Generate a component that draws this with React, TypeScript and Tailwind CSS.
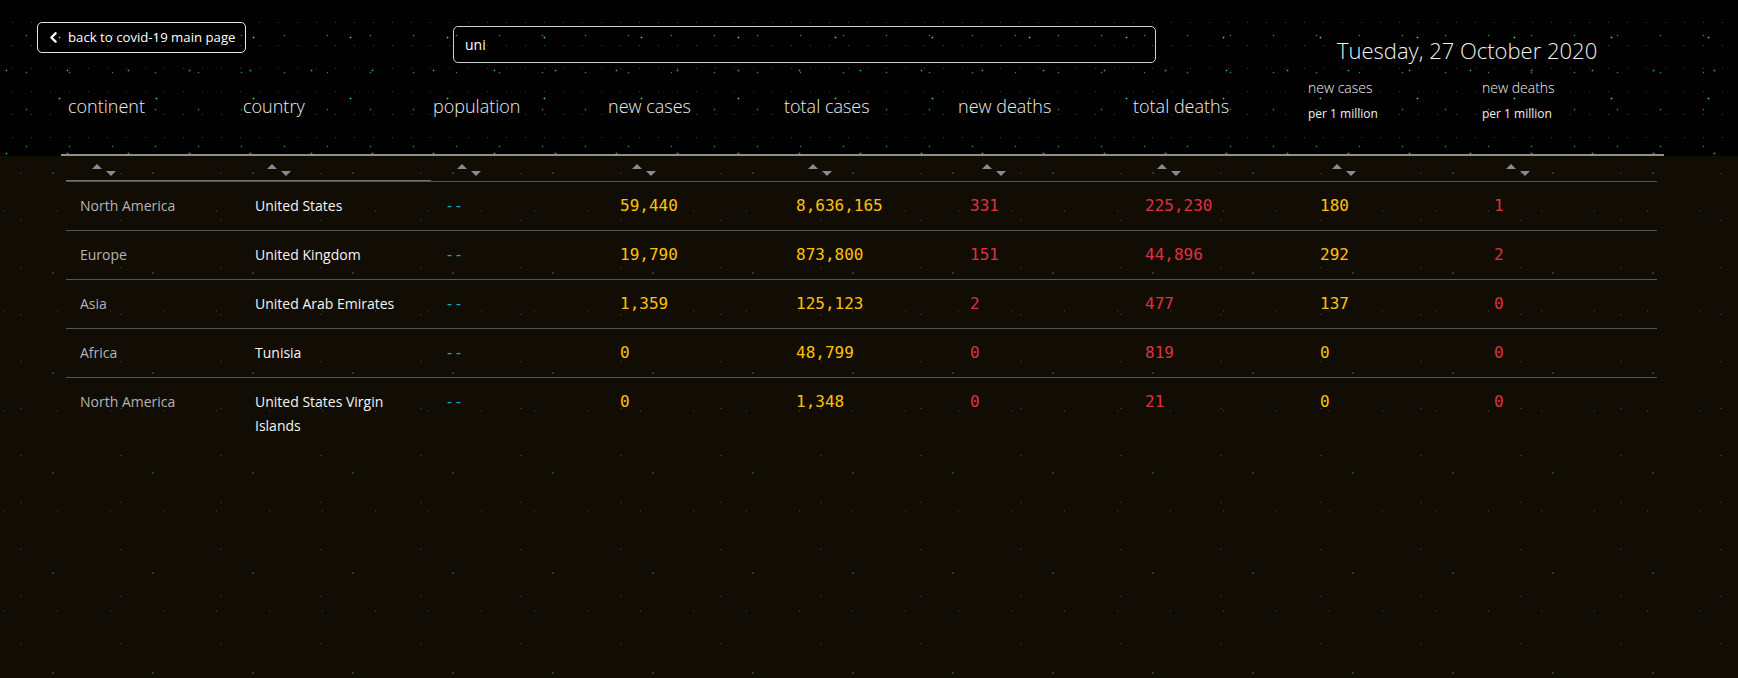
import React from "react";
import { ChevronLeft } from "lucide-react";

const GRID =
  "grid grid-cols-[175px_190px_175px_176px_174px_175px_175px_174px_177px]";

type Row = {
  continent: string;
  country: string;
  newCases: string;
  totalCases: string;
  newDeaths: string;
  totalDeaths: string;
  casesM: string;
  deathsM: string;
};

const rows: Row[] = [
  { continent: "North America", country: "United States", newCases: "59,440", totalCases: "8,636,165", newDeaths: "331", totalDeaths: "225,230", casesM: "180", deathsM: "1" },
  { continent: "Europe", country: "United Kingdom", newCases: "19,790", totalCases: "873,800", newDeaths: "151", totalDeaths: "44,896", casesM: "292", deathsM: "2" },
  { continent: "Asia", country: "United Arab Emirates", newCases: "1,359", totalCases: "125,123", newDeaths: "2", totalDeaths: "477", casesM: "137", deathsM: "0" },
  { continent: "Africa", country: "Tunisia", newCases: "0", totalCases: "48,799", newDeaths: "0", totalDeaths: "819", casesM: "0", deathsM: "0" },
  { continent: "North America", country: "United States Virgin Islands", newCases: "0", totalCases: "1,348", newDeaths: "0", totalDeaths: "21", casesM: "0", deathsM: "0" },
];

const headers = [
  "continent",
  "country",
  "population",
  "new cases",
  "total cases",
  "new deaths",
  "total deaths",
];

function SortArrows() {
  return (
    <svg width="26" height="13" viewBox="0 0 26 13" className="block">
      <polygon points="0,5 5,0 10,5" fill="#868b93" />
      <polygon points="14,7 24,7 19,12" fill="#868b93" />
    </svg>
  );
}

const sans = "font-['Open_Sans','Noto_Sans',sans-serif]";
const mono = "font-['DejaVu_Sans_Mono','Liberation_Mono',monospace]";

export default function App() {
  return (
    <div
      className={`min-h-[678px] w-full bg-[#110d05] ${sans} [background-image:radial-gradient(circle,#3a3424_0.7px,transparent_1.1px),radial-gradient(circle,#2e2a1d_0.7px,transparent_1.1px),radial-gradient(circle,#35301f_0.7px,transparent_1.1px)] [background-size:100px_100px,53px_100px,100px_47px] [background-position:3px_23px,31px_61px,71px_9px]`}
    >
      {/* header band */}
      <div className="w-full bg-black [background-image:radial-gradient(circle,#3fcf3f_0.7px,transparent_1.2px),radial-gradient(circle,#2fa82f_0.7px,transparent_1.2px),radial-gradient(circle,#2b8f2b_0.6px,transparent_1.1px),radial-gradient(circle,#3a3a3a_0.6px,transparent_1px)] [background-size:97px_61px,61px_83px,43px_37px,19px_23px] [background-position:11px_7px,37px_29px,5px_17px,3px_11px]">
        {/* top bar */}
        <div className="flex h-[66px] items-start">
          <button className="ml-[37px] mt-[22px] flex h-[31px] w-[209px] items-center rounded-[5px] border border-[#e6e6e6] bg-transparent pl-[7px] text-[13.2px] text-white whitespace-nowrap">
            <ChevronLeft size={17} strokeWidth={3.4} className="shrink-0 text-white" />
            <span className="ml-[6px] leading-none">back to covid-19 main page</span>
          </button>
          <input
            readOnly
            value="uni"
            className="ml-[207px] mt-[26px] h-[37px] w-[703px] rounded-[5px] border border-[#d0d0d0] bg-transparent px-[11px] text-[14px] text-white outline-none"
          />
          <div className="ml-[181px] mt-[35px] text-[22px] font-light leading-[30px] text-[#f2f2f2] whitespace-nowrap">
            Tuesday, 27 October 2020
          </div>
        </div>

        {/* column labels */}
        <div className={`ml-[66px] h-[80px] w-[1591px] ${GRID}`}>
          {headers.map((h) => (
            <div
              key={h}
              className="flex items-center pl-[2px] text-[18px] font-light text-[#ededed] whitespace-nowrap"
            >
              {h}
            </div>
          ))}
          {["new cases", "new deaths"].map((h) => (
            <div key={h} className="pl-[2px] pt-[12px] text-[#f0f0f0]">
              <div className="text-[14px] font-light leading-[20px]">{h}</div>
              <div className="mt-[6px] text-[12px] leading-[20px]">per 1 million</div>
            </div>
          ))}
        </div>
        <div className="h-[8px]" />
        <div className="ml-[61px] h-[2px] w-[1603px] bg-[#8f8f8f]" />
      </div>

      {/* sort row */}
      <div className={`ml-[66px] w-[1591px] ${GRID} h-[25px]`}>
        {Array.from({ length: 9 }).map((_, i) => (
          <div
            key={i}
            className={`pl-[26px] pt-[8px] ${i < 2 ? "border-b border-[#707070]" : ""}`}
          >
            <SortArrows />
          </div>
        ))}
      </div>

      {/* data rows */}
      <div className="ml-[66px] w-[1591px]">
        {rows.map((r, idx) => (
          <div
            key={idx}
            className={`${GRID} border-t border-[#555555] text-[14px] leading-6`}
          >
            <div className="py-3 pl-[14px] pr-[10px] text-[#b4b4b4]">{r.continent}</div>
            <div className="py-3 pl-[14px] pr-[12px] text-[#f4f4f4]">{r.country}</div>
            <div className={`py-3 pl-[14px] text-[15px] text-[#19a9c0] ${mono}`}>--</div>
            <div className={`py-3 pl-[14px] text-[16px] text-[#ffc107] ${mono}`}>{r.newCases}</div>
            <div className={`py-3 pl-[14px] text-[16px] text-[#ffc107] ${mono}`}>{r.totalCases}</div>
            <div className={`py-3 pl-[14px] text-[16px] text-[#e0303f] ${mono}`}>{r.newDeaths}</div>
            <div className={`py-3 pl-[14px] text-[16px] text-[#e0303f] ${mono}`}>{r.totalDeaths}</div>
            <div className={`py-3 pl-[14px] text-[16px] text-[#ffc107] ${mono}`}>{r.casesM}</div>
            <div className={`py-3 pl-[14px] text-[16px] text-[#e0303f] ${mono}`}>{r.deathsM}</div>
          </div>
        ))}
      </div>
    </div>
  );
}
